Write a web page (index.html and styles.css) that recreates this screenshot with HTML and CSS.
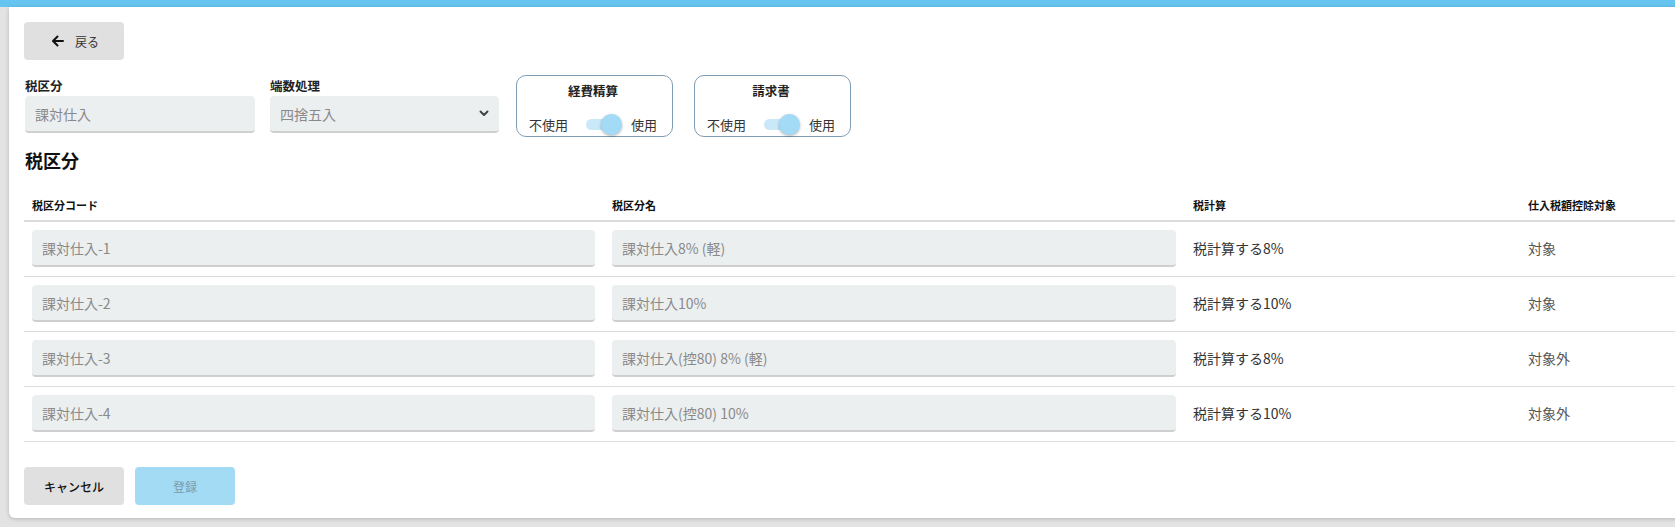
FILE: index.html
```html
<!DOCTYPE html>
<html lang="ja">
<head>
<meta charset="utf-8">
<title>税区分</title>
<link rel="stylesheet" href="styles.css">
</head>
<body>
<div class="topbar"></div>
<div class="card">
  <button class="btn btn-back">
    <svg class="arrow" width="13" height="12" viewBox="0 0 13 12"><path d="M12 6H2 M6.5 1.5L2 6l4.5 4.5" fill="none" stroke="#111" stroke-width="2" stroke-linecap="round" stroke-linejoin="round"/></svg>
    <span>戻る</span>
  </button>

  <div class="form-row">
    <div class="field field-kubun">
      <label class="label">税区分</label>
      <div class="input">課対仕入</div>
    </div>
    <div class="field field-hasu">
      <label class="label">端数処理</label>
      <div class="input select">
        <span>四捨五入</span>
        <svg class="chevron" width="10" height="7" viewBox="0 0 10 7"><path d="M1.5 1.5L5 5l3.5-3.5" fill="none" stroke="#444" stroke-width="2" stroke-linecap="round" stroke-linejoin="round"/></svg>
      </div>
    </div>
    <div class="switch-box">
      <div class="switch-title">経費精算</div>
      <div class="switch-row">
        <span class="off">不使用</span>
        <span class="toggle"><span class="knob"></span></span>
        <span class="on">使用</span>
      </div>
    </div>
    <div class="switch-box">
      <div class="switch-title">請求書</div>
      <div class="switch-row">
        <span class="off">不使用</span>
        <span class="toggle"><span class="knob"></span></span>
        <span class="on">使用</span>
      </div>
    </div>
  </div>

  <h2 class="heading">税区分</h2>

  <table class="tax-table">
    <colgroup>
      <col class="c1"><col class="c2"><col class="c3"><col class="c4">
    </colgroup>
    <thead>
      <tr><th>税区分コード</th><th>税区分名</th><th>税計算</th><th>仕入税額控除対象</th></tr>
    </thead>
    <tbody>
      <tr><td><div class="input">課対仕入-1</div></td><td><div class="input">課対仕入8% (軽)</div></td><td class="calc">税計算する8%</td><td class="target">対象</td></tr>
      <tr><td><div class="input">課対仕入-2</div></td><td><div class="input">課対仕入10%</div></td><td class="calc">税計算する10%</td><td class="target">対象</td></tr>
      <tr><td><div class="input">課対仕入-3</div></td><td><div class="input">課対仕入(控80) 8% (軽)</div></td><td class="calc">税計算する8%</td><td class="target">対象外</td></tr>
      <tr><td><div class="input">課対仕入-4</div></td><td><div class="input">課対仕入(控80) 10%</div></td><td class="calc">税計算する10%</td><td class="target">対象外</td></tr>
    </tbody>
  </table>

  <div class="actions">
    <button class="btn btn-cancel">キャンセル</button>
    <button class="btn btn-submit">登録</button>
  </div>
</div>
</body>
</html>
```

FILE: styles.css
```css
* { box-sizing: border-box; }

html, body {
  margin: 0;
  padding: 0;
  height: 100%;
  overflow: hidden;
}

body {
  background: #e3e3e3;
  font-family: "Noto Sans CJK JP", "Noto Sans", sans-serif;
  color: #222;
}

.topbar {
  height: 7px;
  background: #66c5f0;
}

.card {
  margin-left: 9px;
  width: 1700px;
  background: #fff;
  padding: 15px 15px 13px 15px;
  border-radius: 0 0 6px 6px;
  box-shadow: 0 1px 4px rgba(0, 0, 0, 0.2);
}

.btn {
  font-family: inherit;
  border: none;
  border-radius: 4px;
  width: 100px;
  height: 38px;
  font-size: 12px;
  cursor: pointer;
  display: inline-flex;
  align-items: center;
  justify-content: center;
}

.btn-back {
  background: #e0e0e0;
  color: #333;
  gap: 11px;
  padding-right: 4px;
}

.btn-back .arrow { display: block; }

.form-row {
  display: flex;
  align-items: flex-start;
  margin-top: 15px;
}

.field { display: flex; flex-direction: column; }
.field-kubun { width: 231px; padding-left: 1px; }
.field-hasu { width: 229px; margin-left: 15px; }

.label {
  font-size: 12.5px;
  font-weight: 700;
  line-height: 21px;
  color: #222;
}

.input {
  height: 37px;
  background: #eceff0;
  border-radius: 4px;
  border-bottom: 2px solid #cfcfcf;
  display: flex;
  align-items: center;
  padding: 0 10px;
  font-size: 14px;
  color: #8a8a8a;
  white-space: nowrap;
}

.select {
  justify-content: space-between;
  padding-right: 10px;
}

.chevron { display: block; }

.switch-box {
  width: 157px;
  height: 62px;
  border: 1px solid #7f9db4;
  border-radius: 10px;
  padding: 6px 15px 3px 12px;
  margin-left: 17px;
}

.switch-box + .switch-box { margin-left: 21px; }

.switch-title {
  text-align: center;
  font-size: 12.5px;
  font-weight: 700;
  line-height: 18px;
  color: #222;
}

.switch-row {
  display: flex;
  align-items: center;
  margin-top: 13px;
  height: 22px;
  font-size: 13px;
  color: #333;
}

.toggle {
  position: relative;
  width: 30px;
  height: 11px;
  border-radius: 6px;
  background: #c9e8f8;
  margin-left: 18px;
  margin-right: 15px;
}

.knob {
  position: absolute;
  right: -6px;
  top: -5px;
  width: 21px;
  height: 21px;
  border-radius: 50%;
  background: #a3daf5;
  box-shadow: 0 1px 3px rgba(0, 0, 0, 0.3);
}

.heading {
  margin: 12px 0 0 1px;
  font-size: 18px;
  font-weight: 700;
  line-height: 22px;
  color: #111;
}

.tax-table {
  width: 1660px;
  table-layout: fixed;
  border-collapse: collapse;
}

.c1 { width: 580px; }
.c2 { width: 581px; }
.c3 { width: 335px; }
.c4 { width: 164px; }

.tax-table th {
  height: 50px;
  vertical-align: bottom;
  text-align: left;
  font-size: 11px;
  font-weight: 700;
  line-height: 16px;
  padding: 0 8px 7px;
  border-bottom: 2px solid #dcdcdc;
  color: #111;
}

.tax-table td {
  padding: 8px 9px 9px 8px;
  border-bottom: 1px solid #dcdcdc;
  vertical-align: middle;
}

.tax-table td.calc {
  font-size: 14px;
  color: #333;
  padding-top: 6px;
}

.tax-table td.target {
  font-size: 14px;
  color: #555;
  padding-top: 6px;
}

.actions {
  display: flex;
  gap: 11px;
  margin-top: 25px;
}

.btn-cancel {
  background: #e0e0e0;
  color: #111;
  font-weight: 500;
}

.btn-submit {
  background: #a3dbf5;
  color: #7d9cab;
}
```
